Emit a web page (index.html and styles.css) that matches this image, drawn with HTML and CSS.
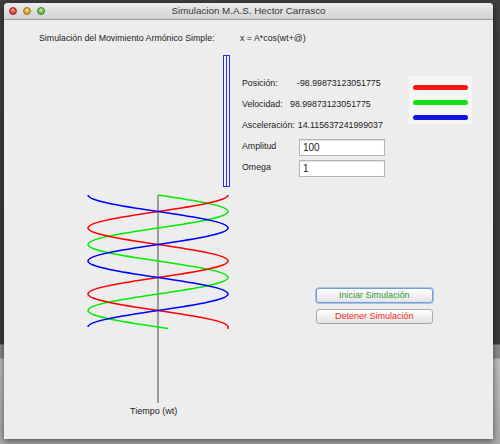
FILE: index.html
```html
<!DOCTYPE html>
<html lang="es">
<head>
<meta charset="utf-8">
<title>Simulacion M.A.S. Hector Carrasco</title>
<link rel="stylesheet" href="styles.css">
</head>
<body>
<div class="window">
  <div class="titlebar">
    <div class="lights">
      <span class="light red"></span>
      <span class="light yellow"></span>
      <span class="light green"></span>
    </div>
    <div class="title">Simulacion M.A.S. Hector Carrasco</div>
    <div></div>
  </div>
  <div class="content">
    <div class="header">
      <span class="header-title">Simulación del Movimiento Armónico Simple:</span>
      <span class="formula">x = A*cos(wt+@)</span>
    </div>
    <div class="main">
      <div class="plot-col">
        <div class="bar"></div>
        <svg class="plot" width="148" height="215" viewBox="84 190 148 215">
          <line x1="158" y1="195" x2="158" y2="403" stroke="#7a7a7a" stroke-width="1.4"/>
          <path fill="none" stroke="#00ee00" stroke-width="1.6" d="M158 195 C193.86 200.38 228 205.53 228 211.5 C228 217.47 193.86 222.62 158 228 C122.14 233.38 88 238.53 88 244.5 C88 250.47 122.14 255.62 158 261 C193.86 266.38 228 271.53 228 277.5 C228 283.47 193.86 288.62 158 294 C122.14 299.38 88 304.53 88 310.5 C88 316.47 122.14 321.62 158 327 L168 328.5"/>
          <path fill="none" stroke="#ff0000" stroke-width="1.6" d="M228 195 C228 200.97 193.86 206.12 158 211.5 C122.14 216.88 88 222.03 88 228 C88 233.97 122.14 239.12 158 244.5 C193.86 249.88 228 255.03 228 261 C228 266.97 193.86 272.12 158 277.5 C122.14 282.88 88 288.03 88 294 C88 299.97 122.14 305.12 158 310.5 C193.86 315.88 228 321.03 228 327 C228 327.7 227.9 328.3 227.6 328.8"/>
          <path fill="none" stroke="#0000ff" stroke-width="1.6" d="M88 195 C88 200.97 122.14 206.12 158 211.5 C193.86 216.88 228 222.03 228 228 C228 233.97 193.86 239.12 158 244.5 C122.14 249.88 88 255.03 88 261 C88 266.97 122.14 272.12 158 277.5 C193.86 282.88 228 288.03 228 294 C228 299.97 193.86 305.12 158 310.5 C122.14 315.88 88 321.03 88 327"/>
        </svg>
        <div class="axis-label">Tiempo (wt)</div>
      </div>
      <div class="side">
        <div class="top">
          <div class="fields">
            <div class="row"><span class="lbl w-pos">Posición:</span><span>-98.99873123051775</span></div>
            <div class="row"><span class="lbl w-vel">Velocidad:</span><span>98.99873123051775</span></div>
            <div class="row"><span class="lbl w-acc">Asceleración:</span><span>14.115637241999037</span></div>
            <div class="row"><span class="lbl w-in">Amplitud</span><input class="field" type="text" value="100"></div>
            <div class="row"><span class="lbl w-in">Omega</span><input class="field" type="text" value="1"></div>
          </div>
          <div class="legend">
            <span class="swatch s-red"></span>
            <span class="swatch s-green"></span>
            <span class="swatch s-blue"></span>
          </div>
        </div>
        <div class="buttons">
          <button class="btn btn-start">Iniciar Simulación</button>
          <button class="btn btn-stop">Detener Simulación</button>
        </div>
      </div>
    </div>
  </div>
</div>
</body>
</html>
```
FILE: styles.css
```css
html, body {
  margin: 0;
  padding: 0;
  width: 500px;
  height: 444px;
  overflow: hidden;
}

body {
  background: linear-gradient(to bottom, #3f3f3f 0, #3a3a3a 344px, #8e8e8e 345px, #898989 358px, #bdbdbd 359px, #a9a9a9 444px);
  font-family: "Liberation Sans", Arial, sans-serif;
  color: #1c1c1c;
}

.window {
  position: absolute;
  left: 4px;
  top: 3px;
  width: 489px;
  height: 436px;
  background: #ededed;
  border-radius: 4px 4px 0 0;
  box-shadow: 0 2px 7px rgba(0, 0, 0, 0.55);
  display: flex;
  flex-direction: column;
  overflow: hidden;
}

.titlebar {
  height: 16px;
  border-bottom: 1px solid #9c9c9c;
  background: linear-gradient(to bottom, #ececec, #d2d2d2);
  display: grid;
  grid-template-columns: 1fr auto 1fr;
  align-items: center;
}

.lights {
  display: flex;
  gap: 6.2px;
  padding-left: 5px;
  align-items: center;
}

.light {
  width: 8px;
  height: 8px;
  border-radius: 50%;
  box-sizing: border-box;
}

.red {
  background: radial-gradient(circle at 50% 35%, #ff9a90 0, #e0443e 55%, #b52a25 100%);
  border: 0.5px solid #9e2a24;
}

.yellow {
  background: radial-gradient(circle at 50% 35%, #ffe08a 0, #e0a526 55%, #b47b12 100%);
  border: 0.5px solid #a0701a;
}

.green {
  background: radial-gradient(circle at 50% 35%, #c4f0a2 0, #6fbf4a 55%, #3f8f2a 100%);
  border: 0.5px solid #3b8428;
}

.title {
  font-size: 9.8px;
  color: #383838;
  line-height: 16px;
}

.content {
  flex: 1;
  font-size: 8.8px;
}

.header {
  display: flex;
  padding: 12px 0 0 35px;
  line-height: 12px;
}

.header-title {
  width: 201px;
}

.main {
  display: grid;
  grid-template-columns: 148px 1fr;
  column-gap: 10px;
  padding-left: 80px;
  margin-top: 11px;
}

.plot-col {
  display: flex;
  flex-direction: column;
}

.bar {
  align-self: flex-end;
  margin-right: 2px;
  width: 7px;
  height: 132px;
  box-sizing: border-box;
  border: 1px solid #2b2bf0;
  background: linear-gradient(to right, #f2f2ff 0, #f2f2ff 2px, #2b2bf0 2px, #2b2bf0 3px, #f2f2ff 3px);
}

.plot {
  display: block;
  margin-top: 3px;
}

.axis-label {
  margin-left: 46px;
  line-height: 12px;
  font-size: 9px;
}

.side {
  padding-top: 17.5px;
  display: flex;
  flex-direction: column;
}

.top {
  display: flex;
}

.fields {
  width: 167px;
  display: flex;
  flex-direction: column;
}

.row {
  height: 21px;
  display: flex;
  align-items: center;
  white-space: nowrap;
}

.w-pos { width: 55px; }
.w-vel { width: 48px; }
.w-acc { margin-right: 3px; }
.w-in { width: 57px; }

.field {
  align-self: flex-end;
  margin: 0 0 0.5px 0;
  width: 86px;
  height: 17px;
  box-sizing: border-box;
  border: 1px solid #b4b4b4;
  box-shadow: inset 0 1px 1px rgba(0, 0, 0, 0.12);
  background: #fff;
  padding: 0 0 0 3px;
  font-family: "Liberation Sans", Arial, sans-serif;
  font-size: 10px;
  color: #1c1c1c;
  outline: none;
}

.legend {
  margin-top: 3.5px;
  width: 63px;
  height: 48px;
  box-sizing: border-box;
  background: #f6f6f6;
  display: flex;
  flex-direction: column;
  gap: 10px;
  padding: 9px 0 0 3.5px;
}

.swatch {
  display: block;
  width: 55px;
  height: 5px;
  border-radius: 3px;
}

.s-red { background: #ff1515; }
.s-green { background: #12e012; }
.s-blue { background: #1414e0; }

.buttons {
  margin: 110px 0 0 74px;
  display: flex;
  flex-direction: column;
  gap: 6.5px;
  width: 116.5px;
}

.btn {
  height: 15px;
  padding: 0;
  box-sizing: border-box;
  border: 1px solid #a9a9a9;
  border-radius: 3px;
  background: linear-gradient(to bottom, #ffffff, #f1f1f1 50%, #e4e4e4);
  font-family: "Liberation Sans", Arial, sans-serif;
  font-size: 9px;
  line-height: 13px;
}

.btn-start {
  color: #2f9a34;
  border-color: #6f9fd6;
  box-shadow: 0 0 0 0.8px #8db4e2;
}

.btn-stop {
  color: #f02a2a;
}
```
